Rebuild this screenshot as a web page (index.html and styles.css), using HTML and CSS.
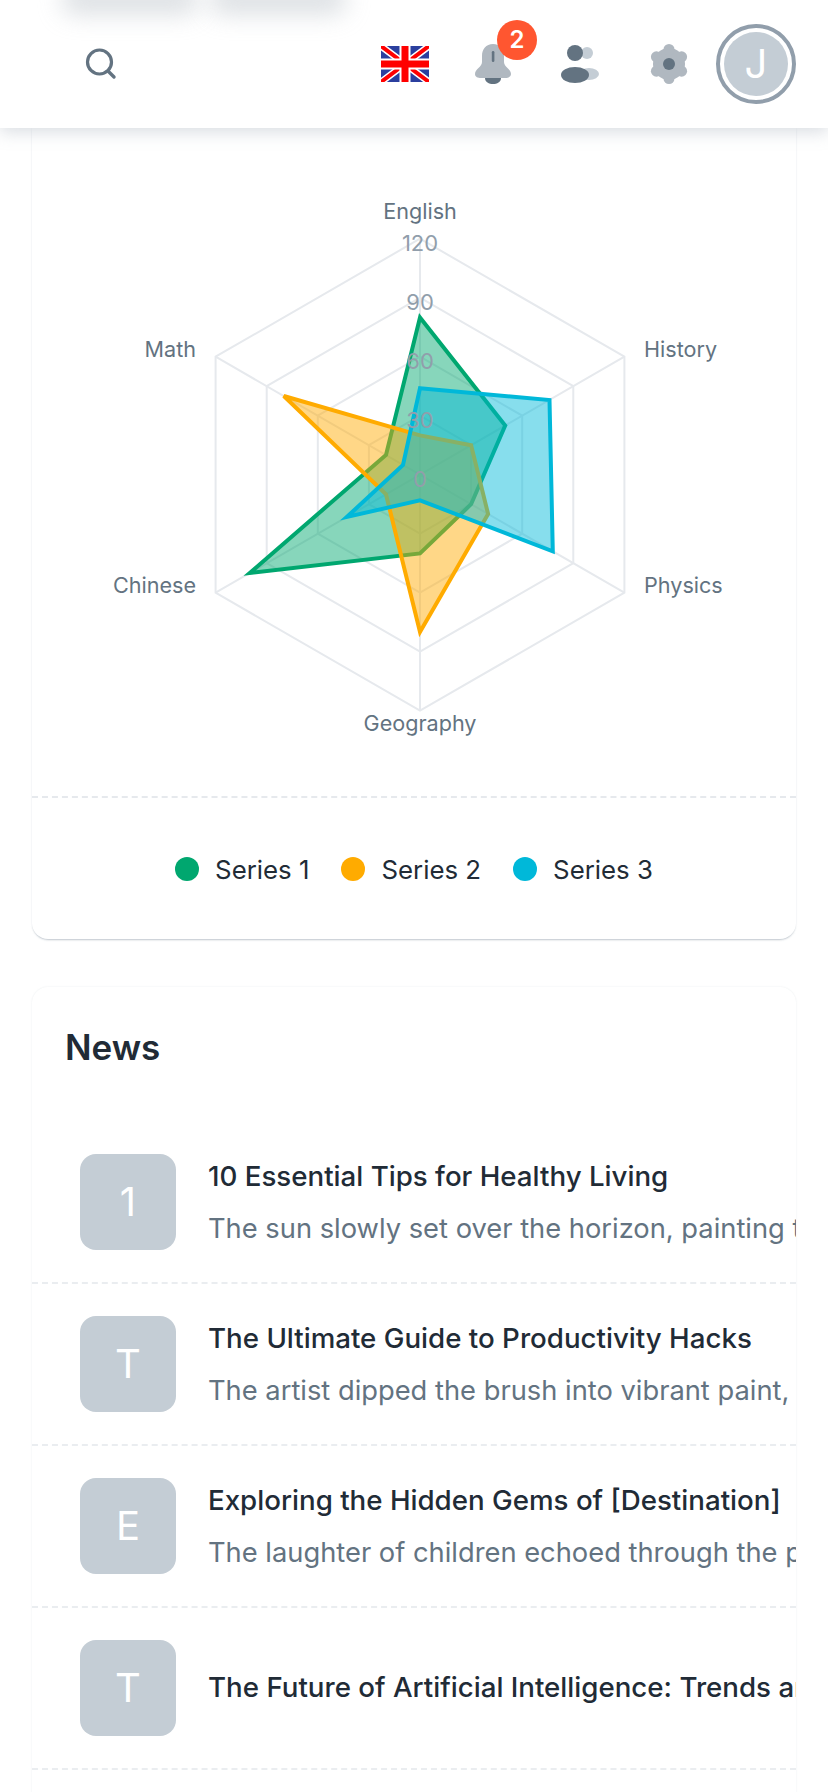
FILE: index.html
```html
<!DOCTYPE html>
<html lang="en">
<head>
    <meta charset="UTF-8">
    <meta name="viewport" content="width=device-width, initial-scale=1.0">
    <title>Dashboard</title>
    <link rel="stylesheet" href="styles.css">
</head>
<body>
    <header class="topbar">
        <div class="topbar-blur">
            <span class="blur-blob blob-one"></span>
            <span class="blur-blob blob-two"></span>
        </div>
        <button class="search-btn" aria-label="Search">
            <svg width="34" height="34" viewBox="0 0 34 34">
                <circle cx="15.5" cy="15" r="12" fill="none" stroke="#637381" stroke-width="3.2"/>
                <path d="M24.5 24.5 L30 30" fill="none" stroke="#637381" stroke-width="3.4" stroke-linecap="round"/>
            </svg>
        </button>
        <div class="topbar-actions">
            <svg class="flag" width="48" height="36" viewBox="0 0 48 36">
                <rect width="48" height="36" fill="#2b3f9e"/>
                <path d="M0 0 L48 36 M48 0 L0 36" stroke="#fff" stroke-width="7"/>
                <path d="M0 0 L48 36 M48 0 L0 36" stroke="#f00" stroke-width="4"/>
                <path d="M24 0 V36 M0 18 H48" stroke="#fff" stroke-width="11"/>
                <path d="M24 0 V36 M0 18 H48" stroke="#f00" stroke-width="7"/>
            </svg>
            <div class="bell">
                <svg width="36" height="40" viewBox="0 0 36 40">
                    <path d="M18 0 C25 0 29 5 29 12 L29 18 C29 23 36 25 36 30 C36 33 33 34 30 34 L6 34 C3 34 0 33 0 30 C0 25 7 23 7 18 L7 12 C7 5 11 0 18 0 Z" fill="#b0b8c0"/>
                    <path d="M10 34 H26 C26 38 22 40 18 40 C14 40 10 38 10 34 Z" fill="#637381"/>
                    <rect x="16.8" y="7" width="2.6" height="11" rx="1.3" fill="#637381"/>
                </svg>
                <span class="badge">2</span>
            </div>
            <svg class="people" width="38" height="38" viewBox="0 0 38 38">
                <circle cx="26" cy="8" r="6" fill="#c4cdd5"/>
                <ellipse cx="28" cy="29" rx="10" ry="6" fill="#c4cdd5"/>
                <circle cx="14" cy="8" r="8" fill="#637381"/>
                <ellipse cx="14" cy="30" rx="14" ry="8" fill="#637381"/>
            </svg>
            <svg class="gear" width="38" height="40" viewBox="0 0 38 40">
                <g fill="#b0b8c0">
                    <circle cx="19" cy="20" r="16"/>
                    <circle cx="19" cy="5.5" r="5.5"/>
                    <circle cx="19" cy="34.5" r="5.5"/>
                    <circle cx="6.4" cy="12.8" r="5.5"/>
                    <circle cx="31.6" cy="12.8" r="5.5"/>
                    <circle cx="6.4" cy="27.2" r="5.5"/>
                    <circle cx="31.6" cy="27.2" r="5.5"/>
                </g>
                <circle cx="19" cy="20" r="6" fill="#637381"/>
            </svg>
            <div class="avatar-ring"><span class="avatar">J</span></div>
        </div>
    </header>

    <main class="page">
        <section class="card chart-card">
            <svg class="radar" viewBox="32 128 764 668" width="764" height="668">
                <g class="radar-grid">
                    <polygon points="420,238.7 624.4,356.7 624.4,592.7 420,710.7 215.6,592.7 215.6,356.7"/>
                    <polygon points="420,297.7 573.3,386.2 573.3,563.2 420,651.7 266.7,563.2 266.7,386.2"/>
                    <polygon points="420,356.7 522.2,415.7 522.2,533.7 420,592.7 317.8,533.7 317.8,415.7"/>
                    <polygon points="420,415.7 471.1,445.2 471.1,504.2 420,533.7 368.9,504.2 368.9,445.2"/>
                    <path d="M420 238.7 V710.7 M215.6 356.7 L624.4 592.7 M624.4 356.7 L215.6 592.7"/>
                </g>
                <polygon class="series series-green" points="420,317.4 505.2,425.5 471.1,504.2 420,553.4 249.7,573 386,455"/>
                <polygon class="series series-orange" points="420,435.4 471.1,445.2 488.1,514 420,632 386,494.4 283.8,396"/>
                <polygon class="series series-cyan" points="420,388.2 549.5,400 552.8,551.4 420,500.3 346.8,517 403,464.9"/>
                <g class="radar-scale">
                    <text x="420" y="251">120</text>
                    <text x="420" y="310">90</text>
                    <text x="420" y="369">60</text>
                    <text x="420" y="428">30</text>
                    <text x="420" y="487">0</text>
                </g>
                <g class="radar-labels">
                    <text x="420" y="219" text-anchor="middle">English</text>
                    <text x="644" y="357">History</text>
                    <text x="644" y="593">Physics</text>
                    <text x="420" y="731" text-anchor="middle">Geography</text>
                    <text x="196" y="593" text-anchor="end">Chinese</text>
                    <text x="196" y="357" text-anchor="end">Math</text>
                </g>
            </svg>
            <div class="legend">
                <div class="legend-item"><span class="dot dot-green"></span>Series 1</div>
                <div class="legend-item"><span class="dot dot-orange"></span>Series 2</div>
                <div class="legend-item"><span class="dot dot-cyan"></span>Series 3</div>
            </div>
        </section>

        <section class="card news-card">
            <h2 class="news-heading">News</h2>
            <div class="news-row">
                <div class="news-thumb">1</div>
                <div class="news-text">
                    <div class="news-title">10 Essential Tips for Healthy Living</div>
                    <div class="news-desc">The sun slowly set over the horizon, painting the sky in warm hues.</div>
                </div>
            </div>
            <div class="news-row">
                <div class="news-thumb">T</div>
                <div class="news-text">
                    <div class="news-title">The Ultimate Guide to Productivity Hacks</div>
                    <div class="news-desc">The artist dipped the brush into vibrant paint, creating bold strokes.</div>
                </div>
            </div>
            <div class="news-row">
                <div class="news-thumb">E</div>
                <div class="news-text">
                    <div class="news-title">Exploring the Hidden Gems of [Destination]</div>
                    <div class="news-desc">The laughter of children echoed through the park on a bright day.</div>
                </div>
            </div>
            <div class="news-row">
                <div class="news-thumb">T</div>
                <div class="news-text">
                    <div class="news-title">The Future of Artificial Intelligence: Trends and Predictions</div>
                </div>
            </div>
            <div class="news-row">
                <div class="news-thumb">T</div>
            </div>
        </section>
    </main>
</body>
</html>
```

FILE: styles.css
```css
* {
    box-sizing: border-box;
}

html,
body {
    height: 1792px;
    overflow: hidden;
}

body {
    margin: 0;
    background-color: #fff;
    color: #212b36;
    font-family: Inter, "Noto Sans", sans-serif;
}

.topbar {
    position: relative;
    z-index: 2;
    display: flex;
    align-items: center;
    justify-content: space-between;
    height: 128px;
    padding: 0 32px 0 84px;
    background-color: #fff;
    box-shadow: 0 4px 16px rgba(145, 158, 171, 0.35);
}

.topbar-blur {
    position: absolute;
    top: -16px;
    left: 62px;
    display: flex;
    gap: 12px;
}

.blur-blob {
    height: 30px;
    background-color: #c4cad0;
    border-radius: 12px;
    filter: blur(12px);
    opacity: 0.6;
}

.blob-one {
    width: 136px;
}

.blob-two {
    width: 136px;
}

.search-btn {
    display: flex;
    padding: 0;
    background: none;
    border: none;
}

.topbar-actions {
    display: flex;
    align-items: center;
}

.flag {
    margin-right: 46px;
}

.bell {
    position: relative;
    display: flex;
    margin-right: 50px;
}

.badge {
    position: absolute;
    top: -24px;
    left: 22px;
    width: 40px;
    height: 40px;
    background-color: #ff5630;
    border-radius: 50%;
    color: #fff;
    font-size: 24px;
    font-weight: 600;
    line-height: 40px;
    text-align: center;
}

.people {
    margin-right: 51px;
}

.gear {
    margin-right: 28px;
}

.avatar-ring {
    width: 80px;
    height: 80px;
    padding: 4px;
    border: 4px solid #919eab;
    border-radius: 50%;
}

.avatar {
    display: block;
    width: 64px;
    height: 64px;
    background-color: #c4cdd5;
    border-radius: 50%;
    color: #fff;
    font-size: 40px;
    line-height: 64px;
    text-align: center;
}

.page {
    padding: 0 32px;
}

.card {
    background-color: #fff;
    border-radius: 0 0 16px 16px;
    box-shadow: 0 0 2px rgba(145, 158, 171, 0.18), 0 2px 2px -1px rgba(145, 158, 171, 0.55);
}

.radar {
    display: block;
}

.radar-grid polygon,
.radar-grid path {
    fill: none;
    stroke: #e6e9ed;
    stroke-width: 2;
}

.series {
    stroke-width: 4;
    fill-opacity: 0.47;
}

.series-green {
    fill: #00a76f;
    stroke: #00a76f;
}

.series-orange {
    fill: #ffab00;
    stroke: #ffab00;
}

.series-cyan {
    fill: #00b8d9;
    stroke: #00b8d9;
}

.radar-scale text {
    fill: #919eab;
    font-size: 22px;
    text-anchor: middle;
}

.radar-labels text {
    fill: #637381;
    font-size: 21.6px;
}

.legend {
    display: flex;
    justify-content: center;
    gap: 32px;
    height: 143px;
    padding-top: 47px;
    border-top: 2px dashed #e6e9ed;
    font-size: 25.8px;
}

.legend-item {
    display: flex;
    align-items: center;
    height: 48px;
}

.dot {
    width: 24px;
    height: 24px;
    margin-right: 16px;
    border-radius: 50%;
}

.dot-green {
    background-color: #00a76f;
}

.dot-orange {
    background-color: #ffab00;
}

.dot-cyan {
    background-color: #00b8d9;
}

.news-card {
    margin-top: 48px;
    overflow: hidden;
    border-radius: 16px;
    box-shadow: 0 0 2px rgba(145, 158, 171, 0.2);
}

.news-heading {
    margin: 0;
    height: 135px;
    padding: 30px 33px 0;
    font-size: 35px;
    font-weight: 600;
    line-height: 60px;
}

.news-row {
    display: flex;
    align-items: center;
    gap: 32px;
    height: 162px;
    padding: 0 48px;
    border-bottom: 2px dashed #eaedf0;
}

.news-thumb {
    flex: none;
    width: 96px;
    height: 96px;
    background-color: #c4cdd5;
    border-radius: 16px;
    color: #fff;
    font-size: 40px;
    line-height: 96px;
    text-align: center;
}

.news-text {
    min-width: 0;
    margin-top: -2px;
}

.news-title {
    font-size: 27.7px;
    font-weight: 500;
    line-height: 44px;
    white-space: nowrap;
}

.news-desc {
    margin: 9px 0 -3px;
    color: #637381;
    font-size: 27.3px;
    line-height: 44px;
    white-space: nowrap;
}
```
